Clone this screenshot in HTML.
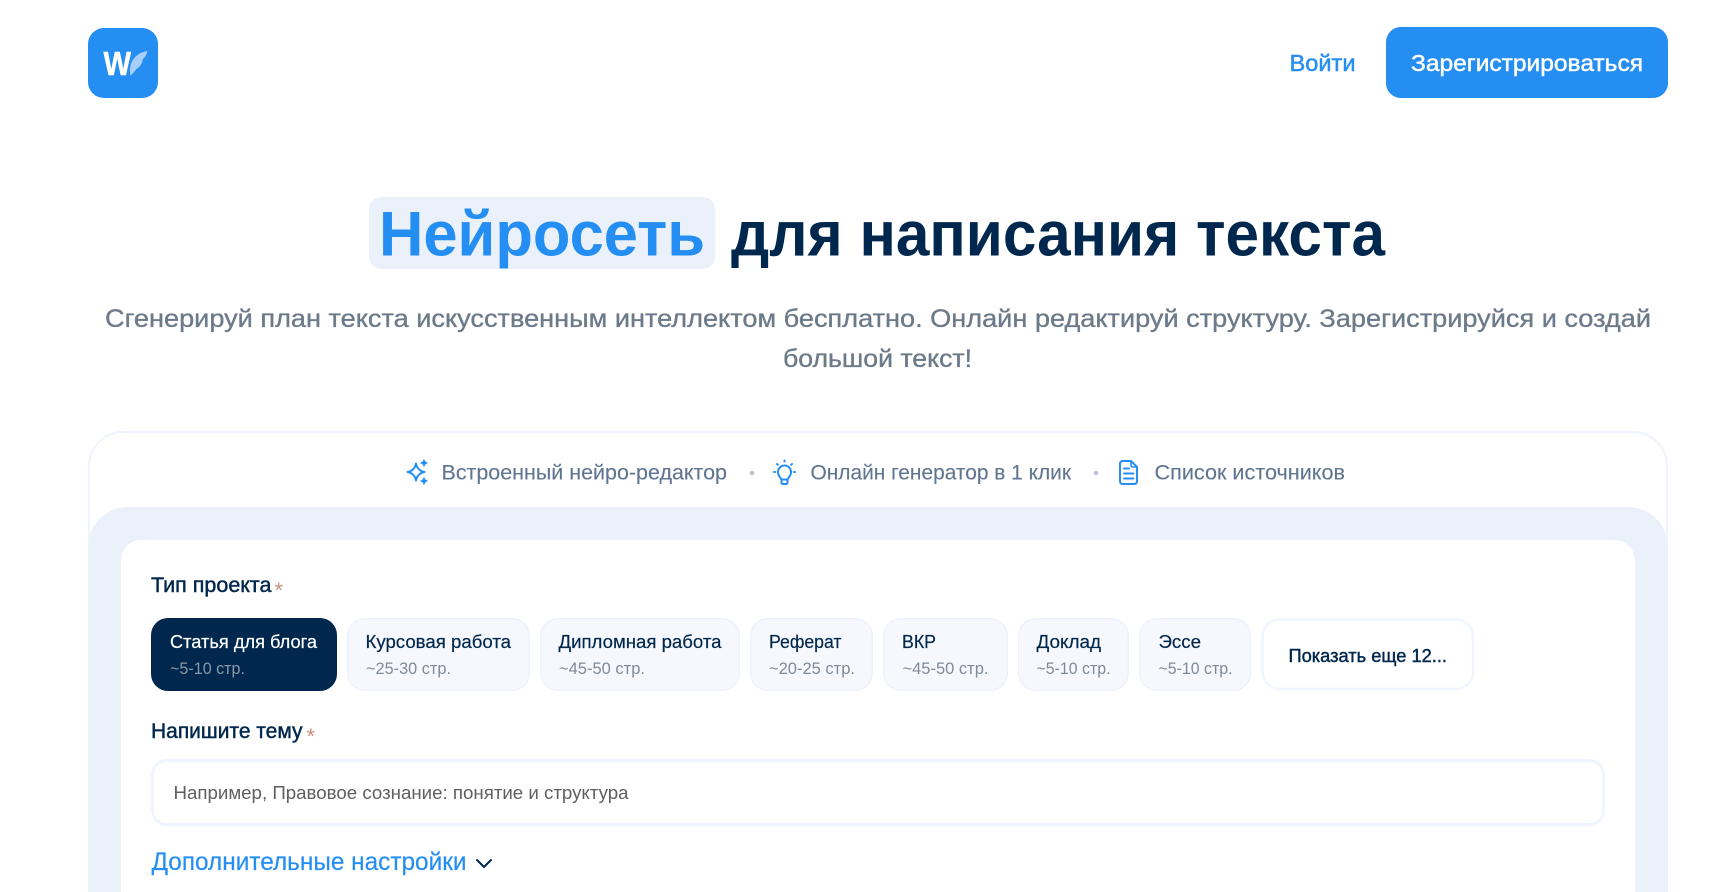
<!DOCTYPE html>
<html lang="ru">
<head>
<meta charset="utf-8">
<title>Нейросеть для написания текста</title>
<style>
html,body{margin:0;padding:0;width:1710px;height:892px;overflow:hidden;background:#fff}
svg{display:block;position:absolute;left:0;top:0}
text{font-family:"Liberation Sans","DejaVu Sans",sans-serif}
.m{stroke-width:.45px;paint-order:stroke}
.navy{fill:#00274d}
.navy.m{stroke:#00274d}
.sub{fill:#7f8a97;font-size:16.8px}
.t{font-size:18.8px;fill:#00274d;stroke:#00274d;stroke-width:.2px}
.f{font-size:21px;fill:#5f7590;stroke:#5f7590;stroke-width:.12px}
.ast{fill:#c9917f;font-size:22px}
</style>
</head>
<body>
<svg width="1710" height="892" viewBox="0 0 1710 892" xmlns="http://www.w3.org/2000/svg">
  <!-- header -->
  <rect x="88" y="28" width="70" height="70" rx="16" fill="#258ef2"/>
  <text x="103.500" y="75" font-size="33" font-weight="700" fill="#fff" stroke="#fff" stroke-width=".5" textLength="27.500" lengthAdjust="spacingAndGlyphs">W</text>
  <path d="M130.500 75.500C128 65 133.500 53 147.500 51C146.500 55 144.500 58 142.500 59.500C143 62.500 139.500 67.500 136.500 69C134.500 71.500 132.500 74 130.500 75.500Z" fill="#a6d0fb"/>
  <text x="1289.500" y="71" font-size="23" fill="#258ef2" class="m" stroke="#258ef2" textLength="66" lengthAdjust="spacingAndGlyphs">Войти</text>
  <rect x="1386" y="27" width="282" height="71" rx="15" fill="#258ef2"/>
  <text x="1411" y="71" font-size="23" fill="#fff" class="m" stroke="#fff" textLength="232" lengthAdjust="spacingAndGlyphs">Зарегистрироваться</text>

  <!-- hero -->
  <rect x="369" y="197" width="346" height="72" rx="12" fill="#ebf1fa"/>
  <text x="379" y="255.500" font-size="63" font-weight="700" fill="#258ef2" textLength="326" lengthAdjust="spacingAndGlyphs">Нейросеть</text>
  <text x="731" y="255.500" font-size="63" font-weight="700" fill="#00274d" textLength="654" lengthAdjust="spacingAndGlyphs">для написания текста</text>
  <text x="105" y="327" font-size="25" fill="#6d7a89" stroke="#6d7a89" stroke-width=".35" textLength="1546" lengthAdjust="spacingAndGlyphs">Сгенерируй план текста искусственным интеллектом бесплатно. Онлайн редактируй структуру. Зарегистрируйся и создай</text>
  <text x="783" y="367" font-size="25" fill="#6d7a89" stroke="#6d7a89" stroke-width=".35" textLength="189" lengthAdjust="spacingAndGlyphs">большой текст!</text>

  <!-- outer card -->
  <path d="M89 892V466A34 34 0 0 1 123 432H1633A34 34 0 0 1 1667 466V892" fill="#fff" stroke="#eff3fb" stroke-width="2"/>
  <path d="M88 892V547A40 40 0 0 1 128 507H1628A40 40 0 0 1 1668 547V892Z" fill="#ebf1fa"/>
  <path d="M121 892V560A20 20 0 0 1 141 540H1615A20 20 0 0 1 1635 560V892Z" fill="#fff"/>

  <!-- feature row -->
  <g fill="none" stroke="#258ef2" stroke-width="2" stroke-linejoin="round" stroke-linecap="round">
    <path d="M416 463.500C417 468.500 419.500 471 424.500 472C419.500 473 417 475.500 416 480.500C415 475.500 412.500 473 407.500 472C412.500 471 415 468.500 416 463.500Z"/>
    <!-- bulb -->
    <path d="M781.300 479.500C781 477.500 778 476.500 778 472A6.500 6.500 0 0 1 791 472C791 476.500 788 477.500 787.700 479.500Z"/>
    <path d="M781.500 480V482.500Q781.500 484 783 484H786Q787.500 484 787.500 482.500V480"/>
    <path d="M784.500 460.500V461.500M774 472H775M794 472H795M777 464L777.800 464.800M792 464L791.200 464.800"/>
    <!-- doc -->
    <path d="M1131 461H1123Q1120 461 1120 464V481Q1120 484 1123 484H1134Q1137 484 1137 481V467Z"/>
    <path d="M1131 461V465Q1131 467 1133 467H1137" stroke-width="1.600"/>
    <path d="M1124 468.500H1129M1124 473.500H1133.500M1124 478.500H1133.500"/>
  </g>
  <path d="M424 459.500C424.400 461.600 425.400 462.600 427.500 463C425.400 463.400 424.400 464.400 424 466.500C423.600 464.400 422.600 463.400 420.500 463C422.600 462.600 423.600 461.600 424 459.500ZM424 477.500C424.400 479.600 425.400 480.600 427.500 481C425.400 481.400 424.400 482.400 424 484.500C423.600 482.400 422.600 481.400 420.500 481C422.600 480.600 423.600 479.600 424 477.500Z" fill="#258ef2" stroke="#258ef2" stroke-width=".8" stroke-linejoin="round"/>
  <text x="441.500" y="479.500" class="f" textLength="285.500" lengthAdjust="spacingAndGlyphs">Встроенный нейро-редактор</text>
  <circle cx="752" cy="473" r="2.200" fill="#b6c0cb"/>
  <text x="810.500" y="479.500" class="f" textLength="260.500" lengthAdjust="spacingAndGlyphs">Онлайн генератор в 1 клик</text>
  <circle cx="1096" cy="473" r="2.200" fill="#b6c0cb"/>
  <text x="1154.500" y="479.500" class="f" textLength="190.500" lengthAdjust="spacingAndGlyphs">Список источников</text>

  <!-- project type -->
  <text x="151" y="592" font-size="21" class="navy m" textLength="120.500" lengthAdjust="spacingAndGlyphs">Тип проекта</text>
  <text x="274.500" y="598" class="ast">*</text>

  <rect x="151" y="618" width="186" height="73" rx="17" fill="#00274d"/>
  <text x="170" y="648" font-size="18.800" fill="#fff" stroke="#fff" stroke-width=".2" textLength="147" lengthAdjust="spacingAndGlyphs">Статья для блога</text>
  <text x="170" y="674" font-size="16.800" fill="#8b98a8" textLength="75" lengthAdjust="spacingAndGlyphs">~5-10 стр.</text>

  <g fill="#f7f8fe" stroke="#eef1fd" stroke-width="1.500">
    <rect x="347.750" y="618.750" width="181.500" height="71.500" rx="17"/>
    <rect x="540.750" y="618.750" width="198.500" height="71.500" rx="17"/>
    <rect x="750.750" y="618.750" width="121.500" height="71.500" rx="17"/>
    <rect x="883.750" y="618.750" width="123.500" height="71.500" rx="17"/>
    <rect x="1018.750" y="618.750" width="109.500" height="71.500" rx="17"/>
    <rect x="1139.750" y="618.750" width="110.500" height="71.500" rx="17"/>
  </g>

  <text x="365.500" y="648" class="t" textLength="145.500" lengthAdjust="spacingAndGlyphs">Курсовая работа</text>
  <text x="366" y="674" class="sub" textLength="85" lengthAdjust="spacingAndGlyphs">~25-30 стр.</text>
  <text x="558.500" y="648" class="t" textLength="163" lengthAdjust="spacingAndGlyphs">Дипломная работа</text>
  <text x="559" y="674" class="sub" textLength="86" lengthAdjust="spacingAndGlyphs">~45-50 стр.</text>
  <text x="769" y="648" class="t" textLength="72.500" lengthAdjust="spacingAndGlyphs">Реферат</text>
  <text x="769" y="674" class="sub" textLength="86" lengthAdjust="spacingAndGlyphs">~20-25 стр.</text>
  <text x="902" y="648" class="t" textLength="34" lengthAdjust="spacingAndGlyphs">ВКР</text>
  <text x="902.500" y="674" class="sub" textLength="86" lengthAdjust="spacingAndGlyphs">~45-50 стр.</text>
  <text x="1036.500" y="648" class="t" textLength="64.500" lengthAdjust="spacingAndGlyphs">Доклад</text>
  <text x="1036.500" y="674" class="sub" textLength="74" lengthAdjust="spacingAndGlyphs">~5-10 стр.</text>
  <text x="1158.500" y="648" class="t" textLength="42.500" lengthAdjust="spacingAndGlyphs">Эссе</text>
  <text x="1158.500" y="674" class="sub" textLength="74" lengthAdjust="spacingAndGlyphs">~5-10 стр.</text>

  <rect x="1262.500" y="619.500" width="210.500" height="69.500" rx="17" fill="#fff" stroke="#f1f5fe" stroke-width="2.500"/>
  <text x="1288.500" y="662" font-size="18.800" class="navy m" textLength="158.500" lengthAdjust="spacingAndGlyphs">Показать еще 12...</text>

  <!-- topic -->
  <text x="151" y="738" font-size="21" class="navy m" textLength="151.500" lengthAdjust="spacingAndGlyphs">Напишите тему</text>
  <text x="306.500" y="744" class="ast">*</text>
  <rect x="152.500" y="760.500" width="1451" height="64" rx="14" fill="#fff" stroke="#f0f4fe" stroke-width="3"/>
  <text x="173.500" y="799" font-size="18.800" fill="#5f5f5f" textLength="455" lengthAdjust="spacingAndGlyphs">Например, Правовое сознание: понятие и структура</text>

  <!-- extra settings -->
  <text x="151.500" y="870" font-size="25" fill="#258ef2" stroke="#258ef2" stroke-width=".2" textLength="315" lengthAdjust="spacingAndGlyphs">Дополнительные настройки</text>
  <path d="M477 860L484 867L491 860" fill="none" stroke="#00274d" stroke-width="2" stroke-linecap="round" stroke-linejoin="round"/>
</svg>
</body>
</html>
